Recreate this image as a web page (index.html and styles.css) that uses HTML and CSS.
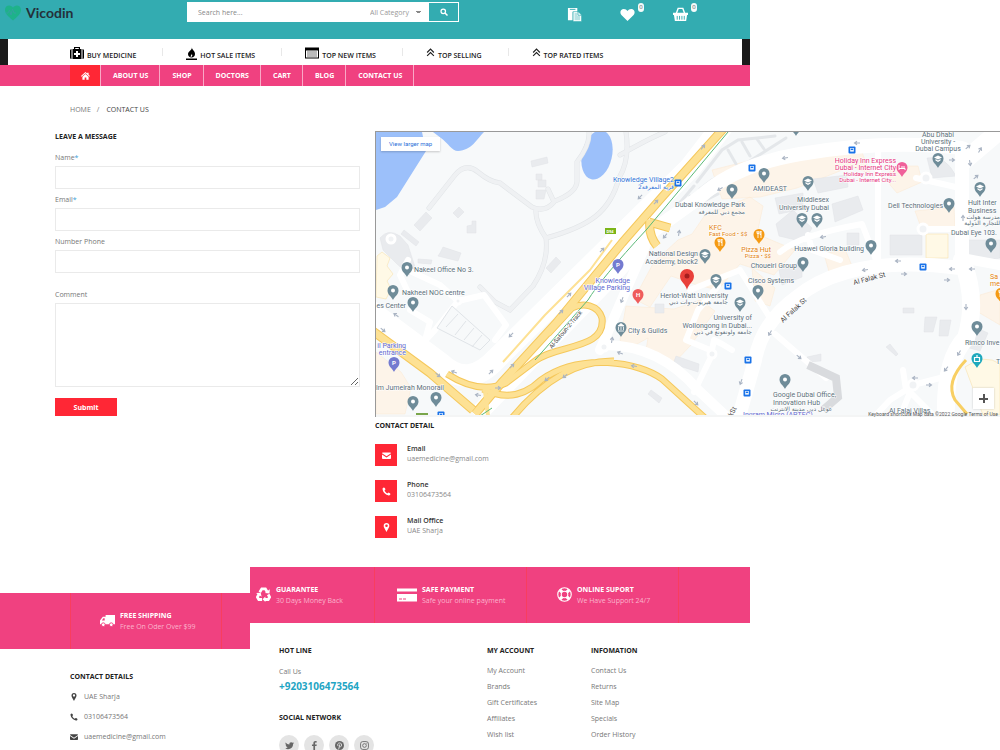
FILE: index.html
```html
<!DOCTYPE html>
<html lang="en">
<head>
<meta charset="utf-8">
<title>Vicodin - Contact Us</title>
<link rel="stylesheet" href="styles.css">
</head>
<body>
<svg class="defs" aria-hidden="true">
  <symbol id="i-phone" viewBox="0 0 16 16"><path d="M3.500 1C4.500 1 5.500 2.500 6 4c.3 1-1.700 1.600-1.300 2.500C5.500 8.500 7.500 10.500 9.500 11.300c.9.400 1.500-1.600 2.500-1.300 1.500.5 3 1.500 3 2.500 0 1.700-1.500 2.700-3.200 2.500C6.500 14.300 1.700 9.500 1 4.200.8 2.500 1.800 1 3.500 1Z"/></symbol>
  <symbol id="i-mail" viewBox="0 0 16 16"><path d="M1.500 2.500h13A1.500 1.500 0 0 1 16 4L8 9.500 0 4a1.500 1.500 0 0 1 1.500-1.500ZM0 6l8 5.500L16 6v6.500a1.500 1.500 0 0 1-1.500 1.500h-13A1.500 1.500 0 0 1 0 12.500Z"/></symbol>
  <symbol id="i-marker" viewBox="0 0 16 16"><path fill-rule="evenodd" d="M8 0a5 5 0 0 1 5 5c0 2-1 4-5 11C4 9 3 7 3 5a5 5 0 0 1 5-5Zm0 2.700a2.300 2.300 0 1 0 0 4.600 2.300 2.300 0 0 0 0-4.600Z"/></symbol>
  <symbol id="i-up" viewBox="0 0 16 16"><path d="m2 8 6-6 6 6M2 14l6-6 6 6" fill="none" stroke="currentColor" stroke-width="2"/></symbol>
</svg>

<header class="site-header">
  <div class="topbar">
    <a class="logo" href="#">
      <svg viewBox="0 0 16 16"><path d="M8 15.500C3 11.500 0 8.500 0 4.800 0 2 2 .5 4.200.5 6 .5 7.300 1.500 8 2.700 8.700 1.500 10 .5 11.800.5 14 .5 16 2 16 4.800c0 3.700-3 6.700-8 10.700Z" fill="#1eb28a"/><path d="M1 8h2l1.500-3L6 10l1.500-6L9 8h2" fill="none" stroke="#33a3a0"/></svg>
      <span>Vicodin</span>
    </a>
    <form class="search">
      <input type="text" placeholder="Search here..." aria-label="Search">
      <select aria-label="Category"><option>All Category</option></select>
      <button type="submit" aria-label="Search"><svg viewBox="0 0 16 16"><circle cx="6.500" cy="6.500" r="4.500" fill="none" stroke="#fff" stroke-width="2.500"/><path d="m10 10 5 5" stroke="#fff" stroke-width="3"/></svg></button>
    </form>
    <nav class="tools" aria-label="Shop tools">
      <a href="#" aria-label="Compare"><svg viewBox="0 0 16 16"><path fill="#fff" d="M1 1h10v4H6v9H1Z"/><path d="M3 2.500h6" stroke="#33acb1"/><path fill="#fff" stroke="#33acb1" stroke-width=".6" d="M6.500 5H12l3.500 3.500V15.500h-9Z"/><path fill="#33acb1" d="M8 6.500h3V9.500h3V14H8Z" opacity=".35"/><path fill="none" stroke="#33acb1" stroke-width=".8" d="M11.700 5v3.800h3.800"/></svg></a>
      <a href="#" aria-label="Wishlist"><svg viewBox="0 0 16 16"><path fill="#fff" d="M8 15 1.500 8.500C-.8 5.500.8 2 4 2c2 0 3 1 4 2.300C9 3 10 2 12 2c3.200 0 4.800 3.500 2.500 6.500Z"/></svg><span class="badge">0</span></a>
      <a href="#" aria-label="Basket"><svg viewBox="0 0 16 16"><path d="m3.500 7 2-5.500h5l2 5.500" fill="none" stroke="#fff" stroke-width="1.500"/><path fill="#fff" d="M0 6h16v2.500h-1L14 15H2L1 8.500H0Z"/><path d="M4.500 9.500v4M7 9.500v4M9.500 9.500v4M12 9.500v4" stroke="#33acb1"/></svg><span class="badge">0</span></a>
    </nav>
  </div>
  <nav class="cats" aria-label="Categories">
    <a href="#"><svg class="w14" viewBox="0 0 14 12"><path d="M0 3.500Q0 2 1.500 2v10Q0 12 0 10.500ZM14 3.500Q14 2 12.500 2v10q1.500 0 1.500-1.500ZM2.500 2H4V0h6v2h1.500v10h-9ZM5.200 2h3.600v-.9H5.200Z" fill-rule="evenodd"/><path d="M7 4v6M4 7h6" stroke="#fff" stroke-width="2"/></svg>BUY MEDICINE</a><i></i>
    <a href="#"><svg class="w11" viewBox="0 0 11 13"><path d="M6 0c-.5 3 3 3.500 3 7 0 2-1.500 3.500-3.500 3.500S2 9 2 7c0-3 4-3.500 4-7Z"/><path d="M5 10c-1-1.500 1-1.800.6-3.200 1.200 1.400.8 2.600-.6 3.200Z" fill="#fff"/><path d="M0 11.500h11V13H0z"/></svg>HOT SALE ITEMS</a><i></i>
    <a href="#"><svg class="w14" viewBox="0 0 14 11"><path fill-rule="evenodd" d="M0 0h14v11H0Zm1 3v7h12V3Z"/><path d="M2 4.500h10M2 6.500h10M2 8.500h10" stroke="#777"/></svg>TOP NEW ITEMS</a><i></i>
    <a href="#"><svg class="w9" viewBox="0 0 16 16"><use href="#i-up"/></svg>TOP SELLING</a><i></i>
    <a href="#"><svg class="w9" viewBox="0 0 16 16"><use href="#i-up"/></svg>TOP RATED ITEMS</a>
  </nav>
  <nav class="menu" aria-label="Main">
    <a class="home" href="#" aria-label="Home"><svg viewBox="0 0 16 14" fill="#fff"><path d="M8 0 11 2.600V1h2.500v3.800L16 7l-1 1.200-7-6-7 6L0 7Z"/><path d="m8 3.500 5.500 4.700V13.500h-4V9.500h-3v4h-4V8.200Z"/></svg></a>
    <a href="#">ABOUT US</a><a href="#">SHOP</a><a href="#">DOCTORS</a><a href="#">CART</a><a href="#">BLOG</a><a href="#">CONTACT US</a>
  </nav>
</header>

<nav class="crumbs" aria-label="Breadcrumb"><a href="#">HOME</a><span>/</span><span class="here">CONTACT US</span></nav>

<main class="content">
  <form class="message">
    <h2>LEAVE A MESSAGE</h2>
    <label for="name">Name<em>*</em></label><input id="name" type="text">
    <label for="email">Email<em>*</em></label><input id="email" type="email">
    <label for="phone">Number Phone</label><input id="phone" type="tel">
    <label class="spaced" for="comment">Comment</label><textarea id="comment"></textarea>
    <button type="submit">Submit</button>
  </form>

  <section class="where">
    <div class="map">
      <svg class="canvas" viewBox="376 132 624 285" preserveAspectRatio="xMinYMin slice" role="img" aria-label="Map of Dubai Knowledge Park">
        <defs>
          <g id="pin"><path d="M0 0C-1-3-5.500-5-5.500-9.500a5.500 5.500 0 0 1 11 0C5.500-5 1-3 0 0Z"/></g>
          <g id="place"><use href="#pin" fill="#6f8c99"/><circle cy="-9.500" r="2" fill="#fff"/></g>
          <g id="school"><use href="#pin" fill="#6f8c99"/><path d="m-4-10.500 4-2 4 2-4 2Zm1.500 1.500L0-7.500 2.500-9v1.500L0-6l-2.500-1.500Z" fill="#fff"/></g>
          <g id="food"><use href="#pin" fill="#f59a13"/><path d="M-2-13v2.500h2V-13M-1-13v7M2-6v-7q-1 1-1 3.500h1" fill="none" stroke="#fff" stroke-width=".9"/></g>
          <g id="bus"><rect x="-3.500" y="-3.500" width="7" height="7" rx="1" fill="#1a73e8"/><path d="M-1.800-2h3.600v3.600h-3.600z" fill="#fff"/><path d="M-1.200-1.400h2.400v1.500h-2.400z" fill="#1a73e8"/></g>
          <g id="arrow"><path d="M-3 0h5M0-1.800 2.500 0 0 1.800" fill="none" stroke="#aab4c3" stroke-width="1.100"/></g>
        </defs>
        <path fill="#f7f9fa" d="M370 120h1200v300H370z"/>
        <g fill="#9cc0fa">
          <path d="M376 132h46l4 19-29 46-12 10-9 3ZM433 132h51c-8 8-12 18-26 19-6 0-10-8-17-13Z"/>
          <ellipse cx="597" cy="155" rx="15" ry="25" transform="rotate(13 597 155)"/>
        </g>
        <g fill="#fdf4e9" stroke="#fbe8d2" stroke-width=".5">
          <path d="M376 352 401 372 411 388 405 414 376 414ZM705 215 750 197 763 206 757 234 795 250 774 275 740 264 718 290 694 284 671 276 650 307 634 299 654 262 678 240 692 234ZM626 306 674 309 700 300 715 311 691 345 673 364 645 356 648 338 626 350 620 340ZM712 170 800 148 858 142 870 173 850 167 797 188 760 197 722 199ZM890 166 918 166 922 182 897 193 890 185ZM915 211 954 207 955 230 922 230ZM980 295 1000 289 1000 325 978 312ZM752 268 775 288 770 306 755 301ZM824 254 845 249 852 266 830 275Z"/>
          <path fill="#fff9e6" stroke="#f6dda0" d="M377 256 382 252 390 258 387 266 393 274 387 281 391 289 386 299 376 297ZM926 234h22v24h-22ZM965 367q20-14 35-3v51h-17Z"/>
        </g>
        <g fill="#e9ebee" stroke="#e0e3e6" stroke-width=".5">
          <path d="m531 161 16-4 1 6-16 4ZM536 174h6v6h-6ZM538 180h8v7h-8ZM536 190h10l-2 9h-8ZM414 225l12-13 6 6-12 13ZM453 213l6-6 5 5-6 6ZM467 226l5-1v-4h4v12h-9ZM401 234l3-4 15 12-3 4ZM440 253l3-6 18 6-3 8-20-5ZM418 259l14 1-1 4-13-1ZM546 268l10-11 5 5-10 11ZM380 238q8-10 20-2l8 9 7 22-6 8-12-11-14-14Z"/>
          <path d="M775 198l28-5v16l-24 5ZM832 204l26-8 5 14-28 12ZM890 235h32v20h-32ZM813 179l34-4 1 12-30 6ZM927 158q18-4 29 18l-24 2ZM847 233h12v12h-12ZM776 224l17-14 19 18-8 14-25-6ZM966 240h34v18l-30 6ZM970 325l18 8-8 18-14-4ZM925 317h12l-4 15h-9ZM940 320h11l-3 16h-9ZM903 308h11v5h-11ZM886 347l4-3 8 10-2 2ZM779 270l23-8v15l-20 8ZM676 356l23 8-1 8-25-8ZM807 357l14-3v7l-14 1ZM648 394l3-4 11 8-3 5ZM655 304h9v9h-9Z"/>
        </g>
        <g fill="none" stroke-linecap="round">
          <path stroke="#e1e4e7" stroke-width="5" d="M429 208 455 175Q466 162 478 172T500 183L532 207Q545 213 554 202L548 189M555 201Q578 192 577 180V162Q590 145 589 132M536 210Q535 222 546 238 549 262 533 286L510 310 495 302 480 287M546 238C590 226 610 212 619 178Q630 160 626 132M620 155Q650 138 665 132"/>
          <path stroke="#eff1f3" stroke-width="4" d="M429 208 455 175Q466 162 478 172T500 183L532 207Q545 213 554 202L548 189M555 201Q578 192 577 180V162Q590 145 589 132M536 210Q535 222 546 238 549 262 533 286L510 310 495 302 480 287M546 238C590 226 610 212 619 178Q630 160 626 132M620 155Q650 138 665 132"/>
          <path stroke="#e4e7ea" stroke-width="3" d="M697 182 722 150 738 140 775 136M700 189 712 180 745 164 786 138M728 150l8 14M742 142l8 14M757 139l7 10M672 212l22-26M690 196l8 8 20-10"/>
        </g>
        <g fill="none" stroke="#fff" stroke-linecap="round" stroke-linejoin="round">
          <path stroke-width="22" d="M370 311 440 363Q468 390 497 358L690 168 724 124"/>
          <path stroke-width="18" d="M482 410 610 278 650 232"/>
          <path stroke-width="14" d="M640 240 700 197Q735 165 800 154T920 145 962 151V260M960 268Q850 254 797 297 762 322 755 360L738 420"/>
          <path stroke-width="18" d="M962 260Q978 300 966 338 944 360 946 420M965 160 1010 122"/>
          <path stroke-width="10" d="M600 350 650 235M604 345Q660 345 698 390L730 420M962 258 1010 267"/>
          <path stroke-width="6" d="M690 290 740 270 770 318M775 334 826 378M410 271 440 285 458 301 484 295 506 325 495 340M458 301 435 330 424 342M410 310 430 322 425 340M408 260 400 275 407 290M780 252Q800 235 862 224L878 265M878 145V259M840 260 812 250 808 235M710 350 686 340 698 310 718 286M712 350 714 340 722 344 732 350M712 355 694 392M874 417 890 400 906 390 903 370M913 385 940 378M913 395 935 417M913 385 900 417M916 178 960 188M920 229 962 229"/>
        </g>
        <path d="M452 306 490 340 480 350 437 328ZM458 314l-12 13M466 321l-11 14M474 328l-10 12M482 335l-10 12" fill="#f7f9fa" stroke="#e0e4e8"/>
        <path d="M808 365 836 378 838 397 823 410" fill="none" stroke="#d9dbde" stroke-width="8"/>
        <g fill="#f1f3f5" stroke="#fff" stroke-width="3"><circle cx="913" cy="385" r="5"/><circle cx="604" cy="347" r="4"/><circle cx="712" cy="354" r="4"/><circle cx="458" cy="301" r="3"/><circle cx="926" cy="178" r="5"/><circle cx="923" cy="229" r="5"/><circle cx="391" cy="239" r="4"/></g>
        <g fill="none" stroke="#f5c85c" stroke-linejoin="round">
          <path stroke-width="9" d="M370 329 430 373 473 410M724 128 663 196 622 243 557 322 503 381 475 414M650 220Q648 235 657 246M649 222 670 228"/>
          <path stroke-width="7" d="M447 374Q480 395 506 383L535 361C557 344 606 350 602 318 598 305 583 302 572 308L548 334M483 389Q515 405 541 380C580 352 640 362 662 379L705 418M512 418Q560 360 614 361"/>
        </g>
        <g fill="none" stroke="#fde194" stroke-linejoin="round">
          <path stroke-width="7" d="M370 329 430 373 473 410M724 128 663 196 622 243 557 322 503 381 475 414M650 220Q648 235 657 246M649 222 670 228"/>
          <path stroke-width="5" d="M447 374Q480 395 506 383L535 361C557 344 606 350 602 318 598 305 583 302 572 308L548 334M483 389Q515 405 541 380C580 352 640 362 662 379L705 418M512 418Q560 360 614 361"/>
          <path stroke-width="2" d="M503 362 545 315 590 270 612 240"/>
          <path stroke-width="4" d="M485 391 488 416"/>
        </g>
        <path d="M966 360Q945 382 955 400L967 414" fill="none" stroke="#f8cf63" stroke-width="3"/>
        <path d="M728 132 647 229Q600 280 588 300L535 360M480 416l12-8" fill="none" stroke="#5bb978" stroke-width="1"/>
        <path d="M416 413h12v2h-12z" fill="#7aa64b"/>
        <g>
          <use href="#arrow" transform="translate(383 330) rotate(40)"/><use href="#arrow" transform="translate(396 315) rotate(215)"/><use href="#arrow" transform="translate(438 375) rotate(40)"/><use href="#arrow" transform="translate(454 372) rotate(200)"/><use href="#arrow" transform="translate(491 372) rotate(-45)"/><use href="#arrow" transform="translate(512 366) rotate(-45)"/><use href="#arrow" transform="translate(511 335) rotate(135)"/><use href="#arrow" transform="translate(561 312) rotate(-45)"/><use href="#arrow" transform="translate(569 295) rotate(-45)"/><use href="#arrow" transform="translate(478 395) rotate(190)"/><use href="#arrow" transform="translate(498 388)"/><use href="#arrow" transform="translate(547 379) rotate(140)"/><use href="#arrow" transform="translate(565 376) rotate(140)"/><use href="#arrow" transform="translate(634 366) rotate(190)"/><use href="#arrow" transform="translate(696 403) rotate(45)"/><use href="#arrow" transform="translate(620 353) rotate(200)"/><use href="#arrow" transform="translate(622 300) rotate(110)"/><use href="#arrow" transform="translate(612 340) rotate(-80)"/><use href="#arrow" transform="translate(602 250) rotate(-45)"/><use href="#arrow" transform="translate(640 197) rotate(135)"/><use href="#arrow" transform="translate(656 202) rotate(-45)"/><use href="#arrow" transform="translate(703 147) rotate(-50)"/><use href="#arrow" transform="translate(720 189) rotate(150)"/><use href="#arrow" transform="translate(785 158) rotate(170)"/><use href="#arrow" transform="translate(857 143) rotate(180)"/><use href="#arrow" transform="translate(952 160)"/><use href="#arrow" transform="translate(968 147) rotate(-40)"/><use href="#arrow" transform="translate(980 150) rotate(-60)"/><use href="#arrow" transform="translate(970 163) rotate(80)"/><use href="#arrow" transform="translate(963 218) rotate(-90)"/><use href="#arrow" transform="translate(976 177) rotate(-40)"/><use href="#arrow" transform="translate(898 261) rotate(180)"/><use href="#arrow" transform="translate(865 270) rotate(170)"/><use href="#arrow" transform="translate(904 274)"/><use href="#arrow" transform="translate(947 280)"/><use href="#arrow" transform="translate(952 269) rotate(180)"/><use href="#arrow" transform="translate(972 269) rotate(180)"/><use href="#arrow" transform="translate(966 307) rotate(90)"/><use href="#arrow" transform="translate(959 353) rotate(120)"/><use href="#arrow" transform="translate(946 369) rotate(130)"/><use href="#arrow" transform="translate(770 333) rotate(120)"/><use href="#arrow" transform="translate(741 382) rotate(110)"/><use href="#arrow" transform="translate(799 357) rotate(40)"/><use href="#arrow" transform="translate(929 385)"/><use href="#arrow" transform="translate(915 378) rotate(180)"/><use href="#arrow" transform="translate(823 237) rotate(170)"/><use href="#arrow" transform="translate(679 233) rotate(-80)"/><use href="#arrow" transform="translate(665 236) rotate(130)"/>
        </g>
        <g>
          <use href="#place" x="407" y="277"/><use href="#place" x="393" y="300"/><use href="#place" x="413" y="312"/><use href="#place" x="413" y="411"/><use href="#place" x="436" y="407"/><use href="#place" x="732" y="199"/><use href="#place" x="764" y="183"/><use href="#place" x="871" y="255"/><use href="#place" x="803" y="272"/><use href="#place" x="758" y="300"/><use href="#place" x="949" y="213"/><use href="#place" x="991" y="253"/><use href="#place" x="977" y="336"/><use href="#place" x="785" y="389"/><use href="#place" x="796" y="136"/>
          <use href="#school" x="705" y="264"/><use href="#school" x="716" y="289"/><use href="#school" x="740" y="312"/><use href="#school" x="808" y="191"/><use href="#school" x="802" y="228"/><use href="#school" x="817" y="228"/><use href="#school" x="938" y="168"/><use href="#school" x="980" y="197"/>
          <use href="#food" x="720" y="252"/><use href="#food" x="759" y="244"/><use href="#food" x="1001" y="303"/>
          <use href="#pin" x="618" y="274" fill="#747bd0"/><use href="#pin" x="394" y="372" fill="#747bd0"/><use href="#pin" x="638" y="304" fill="#ef5c5c"/><use href="#pin" x="902" y="177" fill="#f0609a"/><use href="#pin" x="977" y="368" fill="#1fa9bd"/>
          <use href="#pin" x="621" y="337" fill="#6f8c99"/>
          <path d="m618 326 3-2.500 3 2.500ZM618.500 327v3M621 327v3M623.500 327v3M618 331h6" fill="#fff" stroke="#fff" stroke-width=".8"/>
          <path d="M899 165v5M899 168.500h6v1.500M901 167h4" stroke="#fff" fill="none"/>
          <path d="M974.500 361.500v-4h5v4ZM977 355v3" stroke="#fff" stroke-width="1.200" fill="none"/>
          <g class="sign"><text x="618" y="267">P</text><text x="394" y="365">P</text><text x="638" y="297">H</text></g>
          <path d="M687 290c-1-6-7-8-7-14a7 7 0 0 1 14 0c0 6-6 8-7 14Z" fill="#e9403a"/><circle cx="687" cy="276" r="2.500" fill="#a51e1e"/>
          <use href="#bus" x="678" y="183"/><use href="#bus" x="752" y="168"/><use href="#bus" x="852" y="150"/><use href="#bus" x="923" y="267"/><use href="#bus" x="728" y="286"/><use href="#bus" x="748" y="360"/><use href="#bus" x="747" y="393"/><use href="#bus" x="441" y="415"/>
          <path d="M605 228h11v6h-11z" fill="#7cb518"/><text class="route" x="610" y="233">D94</text>
        </g>
        <g class="lbl">
          <text x="414" y="272">Nakeel Office No 3.</text><text x="402" y="295">Nakheel NOC centre</text><text class="end" x="406" y="308">es Center</text>
          <text x="376" y="390">lm Jumeirah Monorail</text>
          <text class="end" x="745" y="207">Dubai Knowledge Park</text><text class="end ar" x="745" y="214">مجمع دبي للمعرفة</text>
          <text class="mid" x="770" y="191">AMIDEAST</text>
          <text class="end" x="829" y="202">Middlesex</text><text class="end" x="829" y="210">University Dubai</text>
          <text class="end" x="698" y="256">National Design</text><text class="end" x="698" y="264">Academy, block2</text>
          <text class="end" x="728" y="298">Heriot-Watt University</text><text class="end ar" x="728" y="304">جامعة هيريوت-وات دبي</text>
          <text class="end" x="752" y="320">University of</text><text class="end" x="752" y="328">Wollongong in Dubai...</text><text class="end ar" x="752" y="334">جامعة ولونغونغ في دبي</text>
          <text x="628" y="333">City &amp; Guilds</text><text class="end" x="794" y="283">Cisco Systems</text><text class="end" x="797" y="268">Choueiri Group</text>
          <text class="end" x="864" y="251">Huawei Gloria building</text><text class="end" x="943" y="208">Dell Technologies</text>
          <text class="mid" x="938" y="137">Abu Dhabi</text><text class="mid" x="938" y="144">University -</text><text class="mid" x="938" y="151">Dubai Campus</text>
          <text x="968" y="205">Hult Inter</text><text x="968" y="213">Business</text><text class="end ar" x="1000" y="219">مدرسة هولت</text><text class="end ar" x="1000" y="225">للتجارة الدولية</text>
          <text x="951" y="235">Dubai Eye 103.</text><text x="965" y="345">Rimco Inve</text><text x="996" y="364">T</text>
          <text x="773" y="397">Google Dubai Office,</text><text x="773" y="405">Innovation Hub</text><text class="end ar" x="832" y="411">غوغل دبي مدينة الانترنت</text>
          <text x="889" y="413">Al Falaj Villas</text>
        </g>
        <g class="lbl blue"><text class="end" x="674" y="182">Knowledge Village2</text><text class="end ar" x="674" y="189">قرية المعرفة2</text></g>
        <g class="lbl violet"><text class="end" x="630" y="283">Knowledge</text><text class="end" x="630" y="290">Village Parking</text><text class="end" x="406" y="348">il Parking</text><text class="end" x="406" y="355">entrance</text><text x="743" y="417">Ingram Micro (APTEC)</text></g>
        <g class="lbl food"><text x="709" y="230">KFC</text><text class="tiny" x="709" y="236">Fast Food • $$</text><text class="end" x="771" y="252">Pizza Hut</text><text class="end tiny" x="771" y="258">Pizza • $$</text><text x="990" y="279">Sa</text><text x="990" y="286">me</text></g>
        <g class="lbl hotel"><text class="end" x="896" y="163">Holiday Inn Express</text><text class="end" x="896" y="170">Dubai - Internet City</text><text class="end tiny" x="896" y="176">Holiday Inn Express</text><text class="end tiny" x="896" y="182">Dubai - Internet City...</text></g>
        <g class="lbl street"><text transform="translate(854 285) rotate(-15)">Al Falak St</text><text transform="translate(783 323) rotate(-43)">Al Falak St</text><text class="tiny" transform="translate(552 349) rotate(-50)">Al-Safouh-2-Track</text><text transform="translate(732 417) rotate(-60)">kSt</text></g>
        <path d="M376 415h1200v4H376z" fill="#f4f5f5"/>
        <text class="legal" x="998" y="416">Keyboard shortcuts  Map data ©2022 Google  Terms of Use</text>
      </svg>
      <a class="larger" href="#">View larger map</a>
      <button class="zoom" type="button" aria-label="Zoom in"></button>
    </div>
    <h2>CONTACT DETAIL</h2>
    <ul class="details">
      <li><span class="tile"><svg><use href="#i-mail"/></svg></span><div><b>Email</b>uaemedicine@gmail.com</div></li>
      <li><span class="tile"><svg><use href="#i-phone"/></svg></span><div><b>Phone</b>03106473564</div></li>
      <li><span class="tile"><svg><use href="#i-marker"/></svg></span><div><b>Mail Office</b>UAE Sharja</div></li>
    </ul>
  </section>
</main>

<footer class="foot">
  <div class="foot-left">
    <div class="band">
      <div class="perk first"><svg viewBox="0 0 16 16" fill="#fff"><path fill-rule="evenodd" d="M6 2h10v10H0V8l3-4h3ZM2 8h3V5.500H3.500Z"/><circle cx="3.500" cy="12.500" r="2" stroke="#f04180"/><circle cx="12" cy="12.500" r="2" stroke="#f04180"/></svg><div><b>FREE SHIPPING</b>Free On Oder Over $99</div></div>
    </div>
    <section class="contact">
      <h2>CONTACT DETAILS</h2>
      <ul>
        <li><svg><use href="#i-marker"/></svg>UAE Sharja</li>
        <li><svg><use href="#i-phone"/></svg>03106473564</li>
        <li><svg><use href="#i-mail"/></svg>uaemedicine@gmail.com</li>
      </ul>
    </section>
  </div>
  <div class="foot-right">
    <div class="band wide">
      <div class="perk p1"><svg viewBox="0 0 16 16"><g fill="none" stroke="#fff" stroke-width="3"><path d="M4 5.500 6.200 2H10l1.800 3M13 8l1.500 2.800-1.500 2.500H9.500M6.500 13.300H3L1.500 10.800 3.200 7.500"/></g><path fill="#fff" d="m9.500 6.500 4.800.5.500-4.500ZM10 10v6l-3-3ZM0 6.500l5-.5 1 4.500Z"/></svg><div><b>GUARANTEE</b>30 Days Money Back</div></div>
      <div class="perk p2"><svg class="card" viewBox="0 0 20 14"><path fill="#fff" d="M0 1h20v3H0zM0 6.500h20V14H0z"/><path d="M2 11.500h3M6 11.500h3" stroke="#f04180"/></svg><div><b>SAFE PAYMENT</b>Safe your online payment</div></div>
      <div class="perk p3"><svg viewBox="0 0 16 16" fill="none" stroke="#fff"><circle cx="8" cy="8" r="7.200" stroke-width="1.200"/><circle cx="8" cy="8" r="3.500" stroke-width="1.200"/><path stroke-width="3.500" d="m3 3 2.500 2.500M13 3l-2.500 2.500M3 13l2.500-2.500M13 13l-2.500-2.500"/></svg><div><b>ONLINE SUPORT</b>We Have Support 24/7</div></div>
      <div></div>
    </div>
    <div class="cols">
      <section class="hot">
        <h2>HOT LINE</h2>
        <p>Call Us</p>
        <a class="number" href="#">+9203106473564</a>
        <h2>SOCIAL NETWORK</h2>
        <div class="social">
          <a href="#" aria-label="Twitter"><svg viewBox="0 0 16 16"><path d="M1 2.500c2 2.200 4 3.300 6.800 3.500C7.500 3.500 9 2 11 2c1 0 1.700.3 2.400 1L15.500 2.200 14.500 4l1.500-.2-1.600 1.700C14.500 11 10.500 14.500 5.500 14.500 3.500 14.500 2 14 .5 13c2 0 3.300-.3 4.500-1.300-1.500-.2-2.500-1-3-2.300h1.400C1.800 8.800 1 7.800 1 6.200l1.300.4C1 5.500.4 4 1 2.500Z"/></svg></a>
          <a href="#" aria-label="Facebook"><svg viewBox="0 0 16 16"><path d="M12 .3v2.500h-1.500C9.200 2.800 9 3.400 9 4.200V6h3l-.4 2.700H9V16H6V8.700H3.500V6H6V3.800C6 1.500 7.500.2 9.700.2Z"/></svg></a>
          <a href="#" aria-label="Pinterest"><svg viewBox="0 0 16 16"><circle cx="8" cy="8" r="8"/><path d="M6.500 15 8.500 6M5.500 9C3.500 6 5.500 3.500 8.200 3.500c5 0 4 7 .8 7-1 0-1.500-.5-1.500-.5" fill="none" stroke="#e4e4e4" stroke-width="1.600"/></svg></a>
          <a href="#" aria-label="Instagram"><svg viewBox="0 0 16 16" fill="none" stroke="#666" stroke-width="1.500"><rect x="1" y="1" width="14" height="14" rx="4"/><circle cx="8" cy="8" r="3.300"/><path d="M12 3.300v1.400"/></svg></a>
        </div>
      </section>
      <section><h2>MY ACCOUNT</h2><ul><li><a href="#">My Account</a></li><li><a href="#">Brands</a></li><li><a href="#">Gift Certificates</a></li><li><a href="#">Affiliates</a></li><li><a href="#">Wish list</a></li></ul></section>
      <section><h2>INFOMATION</h2><ul><li><a href="#">Contact Us</a></li><li><a href="#">Returns</a></li><li><a href="#">Site Map</a></li><li><a href="#">Specials</a></li><li><a href="#">Order History</a></li></ul></section>
    </div>
  </div>
</footer>
</body>
</html>
```

FILE: styles.css
```css
* { box-sizing: border-box; }
body { margin: 0; background: #fff; color: #777; font: 7px/11px "Open Sans", "Noto Sans", sans-serif; }
a { color: inherit; text-decoration: none; }
h2 { margin: 0; color: #222; font-size: 7px; line-height: 11px; font-weight: 700; }
ul { margin: 0; padding: 0; list-style: none; }
p { margin: 0; }
b { display: block; }
svg { display: block; flex: none; }
button, input, select, textarea { font: inherit; color: inherit; border-radius: 0; }
.defs { position: absolute; width: 0; height: 0; }

.site-header { width: 75%; }
.topbar { display: flex; height: 39px; background: #33acb1; }
.logo { display: flex; width: 187px; padding: 4px 0 0 5px; gap: 5px; color: #24303a; font: 700 14px/18px Lato, sans-serif; }
.logo svg { width: 16px; height: 16px; margin-top: 1px; }
.search { display: flex; width: 272px; height: 20px; margin-top: 2px; background: #fff; }
.search input { flex: 1; min-width: 0; padding: 0 11px; border: 0; background: none; }
.search input::placeholder { color: #888; opacity: 1; }
.search select { width: 58px; padding: 0; border: 0; appearance: none; color: #999; background: linear-gradient(#888, #888) 46px 9px / 5px 1px no-repeat, linear-gradient(#888, #888) 47px 10px / 3px 1px no-repeat; }
.search button { display: grid; place-items: center; width: 31px; padding: 0; border: 1px solid #fff; background: #33acb1; }
.search button svg { width: 8px; height: 8px; }
.tools { display: flex; gap: 38px; padding: 7px 0 0 108px; }
.tools a { position: relative; }
.tools svg { width: 15px; height: 15px; }
.badge { position: absolute; left: 18px; top: -4px; width: 6px; border-radius: 3px; background: #f4fbfb; color: #555; font-size: 6px; line-height: 9px; text-align: center; }

.cats { display: flex; height: 26px; padding-left: 62px; border: solid #1a1a1a; border-width: 0 8px; color: #222; }
.cats a { display: flex; align-items: flex-start; gap: 3px; padding-top: 11px; white-space: nowrap; font-weight: 600; font-size: 7px; }
.cats a svg { margin-top: -3px; color: #222; }
.cats i { width: 1px; height: 8px; margin: 9px 23px 0 26px; background: #e8e8e8; }
.w14 { width: 14px; height: 12px; }
.w11 { width: 11px; height: 13px; }
.cats .w9 { width: 9px; height: 9px; margin-top: -2px; }

.menu { display: flex; height: 21px; padding-left: 70px; background: #f04180; color: #fff; font-weight: 700; line-height: 21px; }
.menu a { padding: 0 11px 0 12px; border-right: 1px solid #f9a9c6; }
.menu .home { display: grid; place-items: center; width: 31px; padding: 0; background: #ff2735; }
.home svg { width: 9px; height: 8px; }

.crumbs { display: flex; padding: 18px 0 0 70px; }
.crumbs span { margin-left: 6px; }
.crumbs .here { margin-left: 7px; color: #444; }

.content { display: grid; grid-template-columns: 3fr 5fr; padding-top: 16px; }
.message { padding: 0 15px 0 55px; }
.message label { display: block; margin-top: 10px; line-height: 11px; font-size: 7px; }
.message label em { color: #3aa0d8; font-style: normal; }
.message input, .message textarea { display: block; width: 100%; height: 23px; margin-top: 3px; border: 1px solid #eaeaea; background: #fff; }
.message input + label { margin-top: 5px; }
.message input + .spaced { margin-top: 16px; }
.message textarea { height: 84px; resize: vertical; }
.message button { width: 62px; height: 18px; margin-top: 11px; padding: 0; border: 0; background: #ff2735; color: #fff; font-weight: 700; }

.map { position: relative; height: 286px; border: 1px solid #999; border-width: 1px 0 0 1px; }
.canvas { width: 100%; height: 285px; }
.larger { position: absolute; left: 5px; top: 5px; padding: 1px 8px; background: #fff; color: #2a6fd8; font: 6px/12px Roboto, sans-serif; box-shadow: 0 1px 2px #0003; }
.zoom { position: absolute; right: 6px; top: 256px; width: 21px; height: 21px; border: 0; background: linear-gradient(#555, #555) center / 9px 2px no-repeat, linear-gradient(#555, #555) center / 2px 9px no-repeat, #fff; box-shadow: 0 0 2px #0003; }
.where h2 { margin-top: 3px; }
.lbl { font: 7px Roboto, "DejaVu Sans", sans-serif; fill: #5b6f7a; paint-order: stroke; stroke: #fff; stroke-width: 1px; }
.lbl.blue { fill: #2f72d6; }
.lbl.violet { fill: #5d68cf; }
.lbl.food { fill: #e37f0b; }
.lbl.hotel { fill: #e5347e; }
.lbl.street { fill: #444; }
.tiny { font-size: 6px; }
.ar { font: 6px "DejaVu Sans", sans-serif; }
.end { text-anchor: end; }
.mid { text-anchor: middle; }
.sign { font: 700 6px Roboto, sans-serif; fill: #fff; text-anchor: middle; }
.route { font: 700 4px Roboto, sans-serif; fill: #fff; text-anchor: middle; }
.legal { font: 5px Roboto, sans-serif; fill: #555; text-anchor: end; }

.details { display: grid; gap: 14px; padding: 13px 0 29px; color: #888; }
.details li { display: flex; gap: 10px; }
.details li div { line-height: 10px; }
.details b { color: #333; font-weight: 600; }
.tile { display: grid; place-items: center; width: 22px; height: 22px; background: #ff2735; fill: #fff; }
.tile svg { width: 9px; height: 9px; }

.foot { display: grid; grid-template-columns: 1fr 2fr 1fr; color: #777; }
.foot-left { margin-top: 26px; }
.band { height: 56px; padding-left: 70px; background: #f04180; color: #fbb5cd; }
.perk { display: flex; gap: 5px; height: 56px; padding-top: 17px; border-right: 1px solid #f93d5f; white-space: nowrap; }
.perk b { color: #fff; }
.perk svg { width: 15px; height: 15px; margin-top: 3px; }
.perk .card { width: 20px; }
.first { width: 152px; padding-left: 29px; border-left: 1px solid #f93d5f; }
.band.wide { display: grid; grid-template-columns: 125px 152px 152px 1fr; padding: 0; }
.p1 { padding-left: 6px; }
.p2 { padding-left: 22px; }
.p3 { padding-left: 30px; }
.contact { padding: 22px 0 0 70px; }
.contact li { display: flex; align-items: center; gap: 6px; margin-top: 9px; }
.contact svg { width: 8px; height: 8px; fill: #444; }
.cols { display: grid; grid-template-columns: 208px 104px 1fr; padding: 22px 0 0 29px; }
.cols h2 + ul { padding-top: 9px; }
.cols li { margin-bottom: 5px; }
.hot p { margin-top: 10px; }
.number { display: block; margin: 1px 0 18px; color: #1fa5c4; font-size: 10px; line-height: 16px; font-weight: 700; }
.social { display: flex; gap: 5px; margin-top: 12px; }
.social a { display: grid; place-items: center; width: 20px; height: 20px; border-radius: 50%; background: #e4e4e4; fill: #666; }
.social svg { width: 9px; height: 9px; }
```
